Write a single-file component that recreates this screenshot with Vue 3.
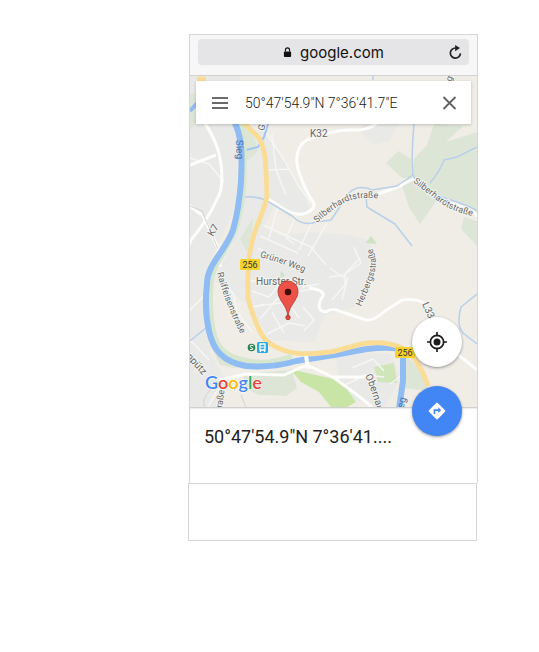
<template>
  <main class="page">
    <section class="browser">
      <header class="toolbar">
        <div class="address">
          <svg class="lock" viewBox="0 0 10 12" aria-hidden="true">
            <path d="M2.7 5V3.2a2.2 2.2 0 0 1 4.6 0V5" fill="none" stroke="#111" stroke-width="1.2" />
            <rect x="1" y="5" width="8" height="6" rx="1" fill="#111" />
          </svg>
          <span>google.com</span>
          <button class="reload" type="button" aria-label="Reload">
            <svg viewBox="0 0 16 16">
              <path d="M13.3 9A5.4 5.4 0 1 1 8.2 3.2" fill="none" stroke="#222" stroke-width="1.8" />
              <path d="M7.6 0 12.8 3.2 7.6 6.6z" fill="#222" />
            </svg>
          </button>
        </div>
      </header>

      <div class="map">
        <svg class="canvas" viewBox="190 76 287 331" preserveAspectRatio="xMidYMid slice">
          <defs>
            <path id="silber-left" d="M317 223C326 214 339 205 348 201Q361 196 382 199" />
            <path id="silber-right" d="M413 182Q427 193 442 204Q454 212 476 217" />
            <path id="herbergs" d="M361 307Q370 287 375 271Q378 258 371 247" />
            <path id="raiffeisen" d="M217 273Q222 291 228 306Q234 322 243 338" />
            <path id="gruner" d="M260 257Q282 263 309 274" />
            <path id="obernau" d="M365 376Q373 391 379 420" />
          </defs>
          <rect x="190" y="76" width="287" height="331" fill="#efede6" />

          <!-- land cover -->
          <g class="town">
            <path d="M190 76H240L238 145 236 205 206 270 203 315 211 355 226 380 218 407H190z" />
            <path d="M262 125 278 151 305 196 311 213 297 215 276 203 265 224 279 236 310 232 350 235 371 241 374 266 355 307 323 316 315 342 270 340 251 307 214 280 232 245 244 200 248 140z" />
            <path d="M365 120 400 123 389 141 374 145 360 131z" />
            <path d="M335 356 390 353 400 378 385 407 343 398z" />
          </g>
          <g class="wood">
            <path d="M434 124 463 126 446 142 477 132V213L443 196 420 190 404 187 412 172 414 159 427 145z" />
            <path d="M386 163 398 151 411 159 412 178 402 178z" />
            <path d="M402 185 416 184 439 197 420 224 409 207z" />
            <path d="M464 217 477 221V246L461 229z" />
            <path d="M244 123 254 137 258 151 246 162 240 142z" />
            <path d="M190 94 204 91 198 121 190 130zM240 239 253 218 252 232 247 252z" />
            <path d="M243 374 292 370 297 388 286 396 259 395 245 388z" />
            <path d="M210 345 223 353 256 362 235 368 220 365zM404 354 418 367 429 391 403 388z" />
          </g>
          <path d="M290 369 333 379 346 388 356 402 347 407H331L319 392 301 382z" fill="#c9e5a6" />
          <path d="M374 367 394 363 397 383 378 382z" fill="#d0e5b9" />
          <path d="M281 271 285 275 280 279zM371 236 377 244 366 243z" fill="#cfe2c3" />

          <!-- streets -->
          <g class="street">
            <path d="M262 127Q270 139 281 155L298 185 311 203M268 170 289 169M272 134 276 170 286 195" />
            <path d="M263 225 311 247 326 265M279 203 269 238M296 216 286 238 294 244M313 220 299 250M327 223 308 256M260 236 298 253M258 248 284 263" />
            <path d="M246 280 275 284 295 292 314 289M252 291 269 297 281 283M251 307 288 302 299 318M260 319 279 297M267 334 289 323 305 326M272 312 284 333M303 307 314 320 304 331M319 284 302 287M255 307 264 304" />
            <path d="M329 277 344 275 360 258M354 247 361 263 345 274 345 285 332 300M330 268 344 278M348 277 342 300" />
            <path d="M190 158 209 164 224 182M190 310 211 289M219 274 234 295 237 312 252 332M208 407 222 382 236 392M190 340 209 360" />
            <path d="M352 368 373 359 384 371M345 385 365 375 384 377M401 376 390 384" />
          </g>
          <g class="road">
            <path d="M198 114Q218 139 221 164T217 199Q209 218 191 240L185 255M190 165 216 155M190 206 203 216 219 250 220 267" />
            <path d="M312 138C294 143 295 163 300 175Q306 192 312 200T306 213Q298 217 282 208L268 199" />
            <path d="M312 138Q335 129 355 130T388 111" />
            <path d="M320 217Q350 194 375 195L398 187 413 179Q435 199 456 205T477 217" />
            <path d="M309 288Q325 290 323 296C317 305 318 311 326 312Q332 307 342 312L366 320Q374 321 385 311L402 300Q415 298 424 303M445 344 477 370" />
            <path d="M219 380 246 374 284 375 302 367 309 366M307 355 309 369M309 366 333 377H365M333 377 360 397 372 407" />
          </g>
          <path d="M190 206 202 211 218 249M235 391Q222 377 211 389T205 407M246 407 241 395" class="lane" />

          <!-- streams and river -->
          <g class="stream">
            <path d="M414 124Q411 158 413 176Q421 190 448 199T477 211M430 183Q440 171 444 160L457 157 477 147" />
            <path d="M244 197Q260 196 269 202L292 216Q303 227 316 222L331 220 349 193Q358 184 372 190L397 186 414 174M366 197 367 207 395 224 412 246" />
            <path d="M190 341 207 327M477 294 461 307Q456 325 463 333L477 344M373 80V76" />
          </g>
          <path d="M268 124 264 137 258 147 246 150" fill="none" stroke="#9fc4f3" stroke-width="2" />
          <path class="bank" d="M238 121C246 136 244 161 244 183Q242 211 235 231C225 254 211 268 211 285Q209 316 215 337C219 350 228 357 244 360Q266 366 292 356" />
          <path class="river" d="M233 119C243 137 242 157 241 181Q239 209 233 230C225 252 207 264 207 284Q204 309 209 331C213 350 223 362 246 366Q273 368 296 361L334 355 367 349Q392 346 403 350L403 381 399 409" />
          <path d="M190 111 201 99" stroke="#8ebcf3" stroke-width="4" />

          <!-- federal road 256 -->
          <path class="federal-edge" d="M243 122 259 138Q266 151 266 171L267 196C264 214 253 230 251 247Q247 264 248 298Q254 321 262 335Q267 344 283 350Q302 357 335 351L361 344Q386 340 402 348T428 386" />
          <path class="federal" d="M243 122 259 138Q266 151 266 171L267 196C264 214 253 230 251 247Q247 264 248 298Q254 321 262 335Q267 344 283 350Q302 357 335 351L361 344Q386 340 402 348T428 386" />
          <path d="M306 356 308 368" fill="none" stroke="#fff" stroke-width="4" />
          <path d="M197 79H206" stroke="#fbdc92" stroke-width="5" />

          <g class="labels">
            <text class="big" x="310" y="137">K32</text>
            <text class="big" transform="translate(213 237) rotate(-60)">K7</text>
            <text class="big" transform="translate(422 304) rotate(66)">L33</text>
            <text transform="translate(264 131) rotate(-78)">G</text>
            <text transform="translate(451 82) rotate(-68)">g</text>
            <text class="big" x="256" y="285">Hurster Str.</text>
            <text><textPath href="#silber-left">Silberhardtstraße</textPath></text>
            <text><textPath href="#silber-right">Silberhardtstraße</textPath></text>
            <text><textPath href="#herbergs">Herbergsstraße</textPath></text>
            <text><textPath href="#raiffeisen">Raiffeisenstraße</textPath></text>
            <text><textPath href="#gruner">Grüner Weg</textPath></text>
            <text class="big"><textPath href="#obernau">Obernau</textPath></text>
            <text class="big" transform="translate(186 357) rotate(48)">npütz</text>
            <text transform="translate(222 408) rotate(-82)">raße</text>
            <text class="water big" transform="translate(236 140) rotate(88)">Sieg</text>
            <text class="water big" transform="translate(403 411) rotate(-76)">ieg</text>
          </g>

          <g v-for="shield in shields" :key="shield.x" class="shield">
            <rect :x="shield.x" :y="shield.y" width="20" height="11" rx="1" />
            <text :x="shield.x + 10" :y="shield.y + 9">256</text>
          </g>

          <!-- station -->
          <circle cx="251.500" cy="347.500" r="3.800" fill="#278554" />
          <path d="M253.500 346Q252 344.500 250.500 345.500T252 348T250 349.500" fill="none" stroke="#fff" />
          <rect x="257" y="342" width="11" height="11" rx="1.500" fill="#28a9e0" />
          <path d="M260 344H265V350H260zM260 352 261 350M265 352 264 350" fill="none" stroke="#fff" stroke-width="1.300" />
          <path d="M260 347H265" stroke="#fff" />

          <!-- marker -->
          <path d="M288 317C287 304 278 301 278 291A10 10 0 0 1 298 291C298 301 289 304 288 317z" fill="#ee5145" stroke="#a83b32" stroke-width=".8" />
          <circle cx="288" cy="292" r="3.300" fill="#3e0d09" />
          <circle cx="288" cy="317.500" r="2.200" fill="#e8473c" stroke="#9e2b22" stroke-width=".8" />

          <text class="logo" x="205" y="389">
            <tspan v-for="(letter, i) in logo" :key="i" :fill="letter.color">{{ letter.char }}</tspan>
          </text>
        </svg>

        <form class="search" @submit.prevent>
          <button type="button" aria-label="Menu">
            <svg viewBox="0 0 18 14"><path d="M1 2H17M1 7H17M1 12H17" fill="none" stroke="#6b6b6b" stroke-width="2" /></svg>
          </button>
          <input v-model="query" type="text" aria-label="Search" />
          <button type="button" aria-label="Clear" @click="query = ''">
            <svg viewBox="0 0 18 14"><path d="M3.500 1 15.500 13M15.500 1 3.500 13" fill="none" stroke="#606060" stroke-width="1.800" /></svg>
          </button>
        </form>

        <button class="fab locate" type="button" aria-label="My location">
          <svg viewBox="0 0 24 24">
            <circle cx="12" cy="12" r="8" fill="none" stroke="#1c1c1c" stroke-width="2" />
            <circle cx="12" cy="12" r="4.200" fill="#1c1c1c" />
            <path d="M12 0V5M12 19V24M0 12H5M19 12H24" stroke="#1c1c1c" stroke-width="2" />
          </svg>
        </button>
        <button class="fab directions" type="button" aria-label="Directions">
          <svg viewBox="0 0 24 24">
            <path d="M11 2.400Q12 1.500 13 2.400L21.600 11Q22.500 12 21.600 13L13 21.600Q12 22.500 11 21.600L2.400 13Q1.500 12 2.400 11z" fill="#fff" />
            <path d="M9 15.500V11H14" fill="none" stroke="#4285f4" stroke-width="2" />
            <path d="M13.500 7.500 17 11 13.500 14.500z" fill="#4285f4" />
          </svg>
        </button>
      </div>

      <div class="place">
        <h1>50°47'54.9"N 7°36'41....</h1>
      </div>
    </section>
    <footer class="bottom"></footer>
  </main>
</template>

<script setup>
import { ref } from 'vue'

const query = ref('50°47\'54.9"N 7°36\'41.7"E')

const shields = [
  { x: 240, y: 259 },
  { x: 395, y: 347 }
]

const logo = [
  { char: 'G', color: '#4285f4' },
  { char: 'o', color: '#ea4335' },
  { char: 'o', color: '#fbbc05' },
  { char: 'g', color: '#4285f4' },
  { char: 'l', color: '#34a853' },
  { char: 'e', color: '#ea4335' }
]
</script>

<style>
body {
  background: #fff;
}
</style>

<style scoped>
* {
  box-sizing: border-box;
}
.page {
  padding: 34px 61px 0 188px;
  font-family: Roboto, sans-serif;
}
.browser {
  margin-left: 1px;
  border: 1px solid #d6d6d6;
  border-bottom: 0;
}
button {
  display: flex;
  align-items: center;
  justify-content: center;
  padding: 0;
  border: 0;
  background: none;
  cursor: pointer;
}
.toolbar {
  height: 41px;
  padding: 4px 8px;
  background: #f7f7f8;
  border-bottom: 1px solid #d2d2d2;
}
.address {
  position: relative;
  display: flex;
  align-items: center;
  justify-content: center;
  gap: 8px;
  height: 26px;
  border-radius: 4px;
  background: #e5e5e7;
  color: #111;
  font: 15px Inter, sans-serif;
}
.lock {
  width: 9px;
  height: 11px;
}
.reload {
  position: absolute;
  right: 6px;
}
.reload svg {
  width: 15px;
  height: 15px;
}
.map {
  position: relative;
  z-index: 1;
}
.canvas {
  display: block;
  width: 100%;
  height: auto;
}
.town {
  fill: #e9e9e8;
}
.wood {
  fill: #dde6d6;
}
.street,
.road,
.lane,
.stream,
.bank,
.river,
.federal,
.federal-edge {
  fill: none;
  stroke-linejoin: round;
}
.street {
  stroke: #f6f6f5;
  stroke-width: 1.5;
}
.road {
  stroke: #fdfdfc;
  stroke-width: 3;
}
.lane {
  stroke: #d2d3d1;
  stroke-width: 1;
}
.stream {
  stroke: #b9cfea;
  stroke-width: 1.5;
}
.bank {
  stroke: #d7e7cf;
  stroke-width: 5;
}
.river {
  stroke: #8ebcf3;
  stroke-width: 6;
}
.federal-edge {
  stroke: #f2dfac;
  stroke-width: 5;
}
.federal {
  stroke: #fbdc92;
  stroke-width: 4;
}
.labels text {
  fill: #666;
  stroke: #f4f4f1;
  stroke-width: 2px;
  paint-order: stroke;
  font-size: 9px;
}
.labels .big {
  font-size: 10px;
}
.labels .water {
  fill: #3f74ae;
  stroke: none;
}
.shield rect {
  fill: #f7d22d;
}
.shield text {
  fill: #333;
  font-size: 9px;
  text-anchor: middle;
}
.logo {
  font: 600 18px Lato, sans-serif;
  stroke: #fff;
  stroke-width: 1px;
  paint-order: stroke;
}
.search {
  position: absolute;
  top: 5px;
  left: 6px;
  right: 6px;
  display: flex;
  align-items: center;
  height: 43px;
  padding: 0 13px 0 15px;
  background: #fff;
  box-shadow: 0 1px 3px rgba(0, 0, 0, 0.2);
}
.search svg {
  width: 18px;
  height: 14px;
}
.search input {
  flex: 1;
  min-width: 0;
  padding: 0 16px;
  border: 0;
  outline: 0;
  background: none;
  color: #222;
  font: 300 14px Roboto, sans-serif;
}
.fab {
  position: absolute;
  right: 15px;
  width: 50px;
  height: 50px;
  border-radius: 50%;
  box-shadow: 0 1px 3px rgba(0, 0, 0, 0.4);
}
.fab svg {
  width: 20px;
  height: 20px;
}
.locate {
  bottom: 40px;
  background: #fff;
}
.directions {
  bottom: -29px;
  background: #4285f4;
}
.place {
  height: 76px;
  padding: 18px 80px 0 14px;
  background: #fff;
  box-shadow: inset 0 2px 2px -1px rgba(0, 0, 0, 0.25);
}
h1 {
  margin: 0;
  color: #222;
  font-size: 18px;
  font-weight: 400;
  line-height: 24px;
  white-space: nowrap;
}
.bottom {
  height: 58px;
  margin-right: 1px;
  border: 1px solid #d6d6d6;
}
</style>
